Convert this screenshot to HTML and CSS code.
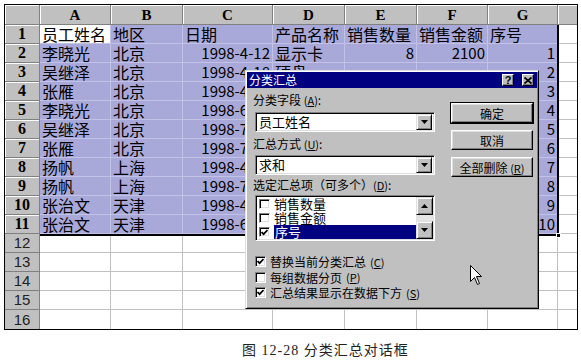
FILE: index.html
```html
<!DOCTYPE html>
<html lang="zh-CN">
<head>
    <meta charset="UTF-8">
    <title>分类汇总对话框</title>
    <link rel="stylesheet" href="styles.css">
</head>
<body>
    <div class="sheet-wrap">
        <table class="sheet">
            <colgroup>
                <col class="c-rh"><col class="c-a"><col class="c-b"><col class="c-c"><col class="c-d">
                <col class="c-e"><col class="c-f"><col class="c-g"><col class="c-h">
            </colgroup>
            <tr class="head-row">
                <th></th><th>A</th><th>B</th><th>C</th><th>D</th><th>E</th><th>F</th><th>G</th><th class="last"></th>
            </tr>
            <tr>
                <th class="rh">1</th>
                <td class="hl active">员工姓名</td><td class="hl">地区</td><td class="hl">日期</td><td class="hl">产品名称</td>
                <td class="hl">销售数量</td><td class="hl">销售金额</td><td class="hl">序号</td><td class="last"></td>
            </tr>
            <tr>
                <th class="rh">2</th>
                <td class="hl">李晓光</td><td class="hl">北京</td><td class="hl num">1998-4-12</td><td class="hl">显示卡</td>
                <td class="hl num">8</td><td class="hl num">2100</td><td class="hl num">1</td><td class="last"></td>
            </tr>
            <tr>
                <th class="rh">3</th>
                <td class="hl">吴继泽</td><td class="hl">北京</td><td class="hl num">1998-4-18</td><td class="hl">硬盘</td>
                <td class="hl"></td><td class="hl"></td><td class="hl num">2</td><td class="last"></td>
            </tr>
            <tr>
                <th class="rh">4</th>
                <td class="hl">张雁</td><td class="hl">北京</td><td class="hl num">1998-4-26</td><td class="hl"></td>
                <td class="hl"></td><td class="hl"></td><td class="hl num">3</td><td class="last"></td>
            </tr>
            <tr>
                <th class="rh">5</th>
                <td class="hl">李晓光</td><td class="hl">北京</td><td class="hl num">1998-6-12</td><td class="hl"></td>
                <td class="hl"></td><td class="hl"></td><td class="hl num">4</td><td class="last"></td>
            </tr>
            <tr>
                <th class="rh">6</th>
                <td class="hl">吴继泽</td><td class="hl">北京</td><td class="hl num">1998-7-10</td><td class="hl"></td>
                <td class="hl"></td><td class="hl"></td><td class="hl num">5</td><td class="last"></td>
            </tr>
            <tr>
                <th class="rh">7</th>
                <td class="hl">张雁</td><td class="hl">北京</td><td class="hl num">1998-7-15</td><td class="hl"></td>
                <td class="hl"></td><td class="hl"></td><td class="hl num">6</td><td class="last"></td>
            </tr>
            <tr>
                <th class="rh">8</th>
                <td class="hl">扬帆</td><td class="hl">上海</td><td class="hl num">1998-4-22</td><td class="hl"></td>
                <td class="hl"></td><td class="hl"></td><td class="hl num">7</td><td class="last"></td>
            </tr>
            <tr>
                <th class="rh">9</th>
                <td class="hl">扬帆</td><td class="hl">上海</td><td class="hl num">1998-7-21</td><td class="hl"></td>
                <td class="hl"></td><td class="hl"></td><td class="hl num">8</td><td class="last"></td>
            </tr>
            <tr>
                <th class="rh">10</th>
                <td class="hl">张治文</td><td class="hl">天津</td><td class="hl num">1998-4-28</td><td class="hl"></td>
                <td class="hl"></td><td class="hl"></td><td class="hl num">9</td><td class="last"></td>
            </tr>
            <tr>
                <th class="rh">11</th>
                <td class="hl">张治文</td><td class="hl">天津</td><td class="hl num">1998-6-19</td><td class="hl"></td>
                <td class="hl"></td><td class="hl"></td><td class="hl num">10</td><td class="last"></td>
            </tr>
            <tr>
                <th class="rh plain">12</th>
                <td></td><td></td><td></td><td></td><td></td><td></td><td></td><td class="last"></td>
            </tr>
            <tr>
                <th class="rh plain">13</th>
                <td></td><td></td><td></td><td></td><td></td><td></td><td></td><td class="last"></td>
            </tr>
            <tr>
                <th class="rh plain">14</th>
                <td></td><td></td><td></td><td></td><td></td><td></td><td></td><td class="last"></td>
            </tr>
            <tr>
                <th class="rh plain">15</th>
                <td></td><td></td><td></td><td></td><td></td><td></td><td></td><td class="last"></td>
            </tr>
            <tr class="bottom-row">
                <th class="rh plain">16</th>
                <td></td><td></td><td></td><td></td><td></td><td></td><td></td><td class="last"></td>
            </tr>
        </table>

        <!-- range border + fill handle drawn over the cells -->
        <div class="sel-frame"><span class="fill-handle"></span></div>

        <div class="dialog">
            <div class="dlg-title">
                <span>分类汇总</span>
                <div class="title-btns">
                    <span class="tbtn">?</span>
                    <span class="tbtn">
                        <svg width="8" height="7" viewBox="0 0 8 7"><path d="M0.5 0.5 L7.5 6.5 M7.5 0.5 L0.5 6.5" stroke="#000" stroke-width="1.8"/></svg>
                    </span>
                </div>
            </div>

            <div class="dlg-body">
                <div class="dlg-left">
                    <div class="dlg-label">分类字段 <span class="key">(<u>A</u>)</span>:</div>
                    <div class="combo">
                        <span class="combo-text">员工姓名</span>
                        <span class="drop-btn"><svg width="7" height="4" viewBox="0 0 7 4"><path d="M0 0 H7 L3.5 4 Z" fill="#000"/></svg></span>
                    </div>

                    <div class="dlg-label label-2">汇总方式 <span class="key">(<u>U</u>)</span>:</div>
                    <div class="combo combo-2">
                        <span class="combo-text">求和</span>
                        <span class="drop-btn"><svg width="7" height="4" viewBox="0 0 7 4"><path d="M0 0 H7 L3.5 4 Z" fill="#000"/></svg></span>
                    </div>

                    <div class="dlg-label label-3">选定汇总项（可多个）<span class="key">(<u>D</u>)</span>:</div>
                    <div class="listbox">
                        <ul class="list-items">
                            <li><span class="cbox small"></span>销售数量</li>
                            <li><span class="cbox small"></span>销售金额</li>
                            <li class="picked">
                                <span class="cbox small"><svg width="7" height="7" viewBox="0 0 7 7"><path d="M0.5 3 L2.6 5.2 L6.5 1" fill="none" stroke="#000" stroke-width="1.7"/></svg></span>
                                <span class="item-text">序号</span>
                            </li>
                        </ul>
                        <div class="vscroll">
                            <span class="sbtn"><svg width="7" height="4" viewBox="0 0 7 4"><path d="M0 4 H7 L3.5 0 Z" fill="#000"/></svg></span>
                            <span class="track"></span>
                            <span class="sbtn"><svg width="7" height="4" viewBox="0 0 7 4"><path d="M0 0 H7 L3.5 4 Z" fill="#000"/></svg></span>
                        </div>
                    </div>

                    <div class="options">
                        <div class="opt">
                            <span class="cbox"><svg width="7" height="7" viewBox="0 0 7 7"><path d="M0.5 3 L2.6 5.2 L6.5 1" fill="none" stroke="#000" stroke-width="1.7"/></svg></span>
                            替换当前分类汇总 <span class="key">(<u>C</u>)</span>
                        </div>
                        <div class="opt">
                            <span class="cbox"></span>
                            每组数据分页 <span class="key">(<u>P</u>)</span>
                        </div>
                        <div class="opt">
                            <span class="cbox"><svg width="7" height="7" viewBox="0 0 7 7"><path d="M0.5 3 L2.6 5.2 L6.5 1" fill="none" stroke="#000" stroke-width="1.7"/></svg></span>
                            汇总结果显示在数据下方 <span class="key">(<u>S</u>)</span>
                        </div>
                    </div>
                </div>

                <div class="dlg-right">
                    <button class="btn default">确定</button>
                    <button class="btn">取消</button>
                    <button class="btn">全部删除 <span class="key">(<u>R</u>)</span></button>
                </div>
            </div>
        </div>

        <svg class="cursor" width="13" height="21" viewBox="0 0 13 21">
            <path d="M0.5 0.5 V16.5 L4.5 12.5 L7.5 19.5 L9.5 18.5 L6.5 11.5 H11.5 Z" fill="#fff" stroke="#000" stroke-width="1"/>
        </svg>
    </div>

    <p class="caption">图 12-28 分类汇总对话框</p>
</body>
</html>
```

FILE: styles.css
```css
* {
    margin: 0;
    padding: 0;
    box-sizing: border-box;
}

body {
    background-color: #fff;
    font-family: "Noto Sans CJK SC", sans-serif;
    width: 581px;
    height: 363px;
    overflow: hidden;
}

/* Sheet */
.sheet-wrap {
    position: relative;
    margin: 4px 0 0 4px;
    width: 574px;
}

.sheet {
    border-collapse: separate;
    border-spacing: 0;
    table-layout: fixed;
    width: 574px;
    border: 1px solid #000;
    font-size: 16px;
    color: #000;
}

.c-rh { width: 35px; }
.c-a { width: 71px; }
.c-b { width: 72px; }
.c-c { width: 90px; }
.c-d { width: 72px; }
.c-e { width: 72px; }
.c-f { width: 71px; }
.c-g { width: 70px; }
.c-h { width: 19px; }

.sheet td {
    height: 19px;
    padding: 0 2px;
    line-height: 18px;
    border-right: 1px solid #c0c0c0;
    border-bottom: 1px solid #c0c0c0;
    white-space: nowrap;
    background-color: #fff;
}

.sheet th {
    background-color: #c0c0c0;
    border-right: 1px solid #808080;
    border-bottom: 1px solid #808080;
    box-shadow: inset 1px 1px #fff;
    font-family: "Liberation Serif", serif;
    font-weight: bold;
    font-size: 15px;
    text-align: center;
    line-height: 18px;
}

.head-row th {
    height: 20px;
}

.sheet th.rh {
    height: 19px;
    font-size: 16px;
}

.sheet th.plain {
    font-family: "Liberation Sans", sans-serif;
    font-weight: normal;
    font-size: 15px;
    color: #222;
    box-shadow: none;
}

.sheet .last {
    border-right: none;
}

.bottom-row td,
.bottom-row th {
    border-bottom: none;
}

.sheet td.hl {
    background-color: #a9a9d9;
    border-color: #c2c2e6;
}

.sheet td.active {
    background-color: #fff;
}

.sheet td.num {
    text-align: right;
    font-size: 15px;
}

.sel-frame {
    position: absolute;
    left: 36px;
    top: 21px;
    width: 519px;
    height: 211px;
    border-right: 2px solid #000;
    border-bottom: 2px solid #000;
    pointer-events: none;
}

.fill-handle {
    position: absolute;
    right: -4px;
    bottom: -4px;
    width: 5px;
    height: 5px;
    background-color: #000;
    border: 1px solid #fff;
}

/* Dialog */
.dialog {
    position: absolute;
    left: 241px;
    top: 66px;
    width: 294px;
    height: 239px;
    background-color: #c0c0c0;
    border: 1px solid;
    border-color: #dfdfdf #000 #000 #dfdfdf;
    box-shadow: inset 1px 1px #fff, inset -1px -1px #808080;
    padding: 1px;
    font-size: 12px;
    color: #000;
}

.dlg-title {
    height: 16px;
    background-color: #000080;
    color: #fff;
    display: flex;
    align-items: center;
    justify-content: space-between;
    padding: 0 3px 0 2px;
    line-height: 16px;
}

.title-btns {
    display: flex;
    gap: 8px;
}

.tbtn {
    width: 12px;
    height: 12px;
    background-color: #c0c0c0;
    border: 1px solid;
    border-color: #fff #000 #000 #fff;
    box-shadow: inset -1px -1px #808080;
    color: #000;
    font: bold 11px "Liberation Sans", sans-serif;
    line-height: 10px;
    display: flex;
    align-items: center;
    justify-content: center;
}

.dlg-body {
    display: flex;
    gap: 16px;
    padding: 5px 3px 0 6px;
}

.dlg-left {
    width: 182px;
}

.dlg-label {
    height: 14px;
    line-height: 14px;
    white-space: nowrap;
}

.key {
    font-size: 11px;
}

.label-2 { margin-top: 5px; }
.label-3 { margin-top: 3px; }

.combo {
    margin: 5px 0 0 2px;
    width: 180px;
    height: 20px;
    background-color: #fff;
    border: 1px solid;
    border-color: #808080 #fff #fff #808080;
    box-shadow: inset 1px 1px #000, inset -1px -1px #dfdfdf;
    padding: 2px;
    display: flex;
    align-items: center;
    justify-content: space-between;
}

.combo-2 {
    margin-top: 4px;
}

.combo-text {
    font-size: 13px;
    line-height: 16px;
    padding-left: 1px;
}

.drop-btn,
.sbtn {
    width: 16px;
    height: 16px;
    background-color: #c0c0c0;
    border: 1px solid;
    border-color: #dfdfdf #000 #000 #dfdfdf;
    box-shadow: inset 1px 1px #fff, inset -1px -1px #808080;
    display: flex;
    align-items: center;
    justify-content: center;
}

.listbox {
    margin: 3px 0 0 2px;
    width: 180px;
    height: 46px;
    background-color: #fff;
    border: 1px solid;
    border-color: #808080 #fff #fff #808080;
    box-shadow: inset 1px 1px #000, inset -1px -1px #dfdfdf;
    padding: 1px;
    display: flex;
}

.list-items {
    list-style: none;
    flex: 1;
    font-size: 13px;
}

.list-items li {
    height: 14px;
    line-height: 14px;
    display: flex;
    align-items: center;
    gap: 4px;
    padding-left: 2px;
}

.list-items li.picked .item-text {
    flex: 1;
    background-color: #000080;
    color: #fff;
    height: 14px;
    padding-left: 1px;
}

.vscroll {
    width: 17px;
    display: flex;
    flex-direction: column;
}

.vscroll .sbtn {
    width: 17px;
    height: 18px;
}

.track {
    flex: 1;
    background-color: #e4e4e4;
}

.cbox {
    width: 11px;
    height: 11px;
    flex: none;
    background-color: #fff;
    border: 1px solid;
    border-color: #808080 #fff #fff #808080;
    box-shadow: inset 1px 1px #000, inset -1px -1px #dfdfdf;
    display: flex;
    align-items: center;
    justify-content: center;
}

.cbox.small {
    width: 11px;
    height: 10px;
}

.options {
    margin-top: 13px;
}

.opt {
    height: 15.5px;
    display: flex;
    align-items: center;
    gap: 4px;
    padding-left: 2px;
    font-size: 12px;
    white-space: nowrap;
}

.dlg-right {
    width: 82px;
    padding-top: 10px;
    display: flex;
    flex-direction: column;
    gap: 7px;
}

.btn {
    height: 20px;
    width: 82px;
    background-color: #c0c0c0;
    border: 1px solid;
    border-color: #fff #000 #000 #fff;
    box-shadow: inset -1px -1px #808080, inset 1px 1px #dfdfdf;
    font-family: "Noto Sans CJK SC", sans-serif;
    font-size: 12px;
    color: #000;
}

.btn.default {
    outline: 1px solid #000;
}

.cursor {
    position: absolute;
    left: 466px;
    top: 261px;
}

/* Caption */
.caption {
    margin: 11px 0 0 242px;
    font-family: "Liberation Serif", "Noto Sans CJK SC", serif;
    font-size: 14px;
    line-height: 20px;
    letter-spacing: 1px;
    color: #222;
}
```
